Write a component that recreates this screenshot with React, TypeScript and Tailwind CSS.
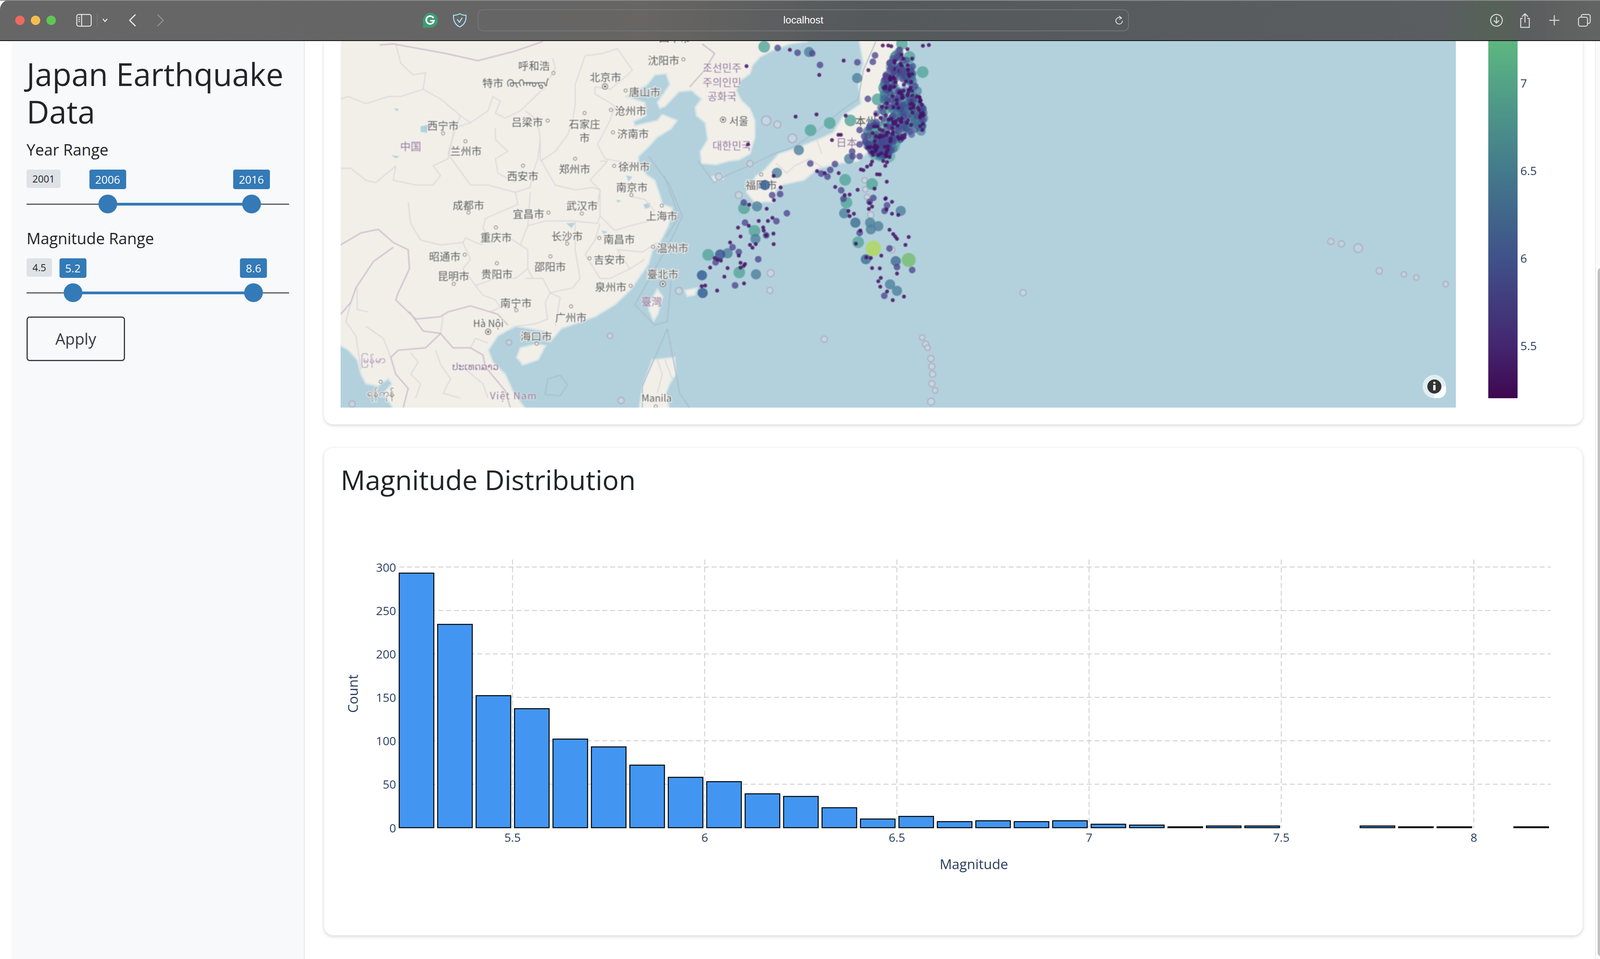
import React from 'react'

// positions traced from the map crops are kept in crop space, zx/zy bring them to page space
const zx = (x: number, from = 860) => from + x / 1.568
const zy = (y: number) => 100 + y / 1.633
const CROP = 'translate(860 100) scale(0.6378 0.6124)'

const COAST =
  'M0,-10 L1907,-10 L1892,10 L1817,22 L1747,50 L1702,75 L1672,110 L1662,145 L1622,175 L1607,215 L1627,255 L1662,290 L1682,340 L1682,410 L1662,480 L1617,505 L1577,510 L1527,525 L1467,520 L1462,470 L1492,420 L1482,350 L1447,320 L1442,285 L1467,250 L1427,215 L1377,220 L1322,280 L1300,290 L1290,265 L1340,190 L1325,145 L1280,150 L1250,190 L1165,240 L1240,265 L1245,320 L1195,345 L1200,362 L1290,340 L1310,315 L1370,340 L1345,375 L1290,410 L1255,450 L1215,490 L1215,520 L1245,565 L1280,590 L1300,650 L1310,690 L1350,705 L1335,780 L1300,850 L1270,885 L1255,940 L1225,985 L1185,1045 L1120,1110 L1040,1160 L905,1210 L860,1265 L835,1220 L720,1200 L650,1240 L612,1300 L630,1350 L680,1400 L710,1470 L770,1560 L240,1560 L190,1480 L225,1440 L210,1420 L170,1450 L120,1440 L100,1400 L85,1340 L50,1300 L0,1270 Z'

const ISLANDS = [
  // honshu, shikoku and kyushu, in the crop of the right half
  'M2097,-10 L2117,100 L2097,190 L2107,270 L2037,320 L1997,390 L1957,410 L1887,440 L1837,460 L1777,480 L1717,550 L1687,570 L1657,620 L1647,640 L1687,690 L1717,680 L1757,680 L1767,630 L1787,610 L1877,590 L1937,540 L2017,520 L2097,510 L2137,470 L2197,440 L2237,380 L2227,300 L2267,200 L2292,100 L2297,-10 Z',
  // taiwan
  'M1290,1045 L1312,1075 L1292,1150 L1275,1178 L1255,1130 L1260,1100 Z',
  // hainan
  'M740,1290 L800,1275 L842,1280 L812,1340 L750,1362 L725,1330 Z',
  // luzon
  'M1270,1340 L1360,1330 L1365,1400 L1340,1440 L1325,1480 L1340,1560 L1215,1560 L1230,1450 Z',
  // jeju and small bits
  'M1510,575 L1550,565 L1555,585 L1520,595 Z',
  'M1400,1050 L1450,1040 L1440,1070 L1410,1075 Z',
]

const LAKES = [
  'M340,365 L370,358 L365,392 L340,388 Z',
  'M232,290 L252,292 L245,302 Z',
  'M222,485 L255,490 L240,498 Z',
  'M1125,672 L1145,675 L1132,684 Z',
  'M1235,690 L1262,685 L1258,705 L1240,708 Z',
  'M1165,570 L1190,575 L1175,595 Z',
  'M1065,800 L1090,805 L1075,815 Z',
  'M925,770 L960,768 L945,790 Z',
]

const BORDERS = [
  'M175,25 L230,20 L440,60 L570,90 L720,50 L830,10',
  'M19,860 L100,810 L170,795 L230,850 L290,880 L295,960 L250,1060 L240,1090 L280,1130 L320,1170 L420,1160 L450,1140 L540,1115 L620,1140 L650,1150 L690,1195',
  'M295,1140 L350,1220 L420,1230 L470,1290 L540,1290 L590,1320 L600,1370 L680,1470 L700,1540',
  'M19,1150 L60,1100 L80,1040 L150,930 L230,870',
  'M250,1300 L220,1330 L240,1400 L290,1460 L270,1540',
  'M420,1230 L360,1290 L250,1300',
  'M1420,200 L1480,130 L1520,60 L1470,20',
]

const MARITIME = [
  'M1255,490 L1340,610 L1390,740 L1350,830 L1280,960 L1200,1110 L1280,1195 L1330,1180 L1345,1010',
  'M1330,1210 L1230,1450 L1230,1542 M1330,1210 L1380,1480 L1420,1542',
  'M850,1420 L900,1405 L930,1445 L900,1490 L840,1485 Z',
  'M1455,510 L1517,600 L1567,570 L1657,530 L1757,480 L1837,450 L1927,390 L2027,300 L2097,250 L2117,130 L2167,10',
  'M1317,570 L1377,740 L1325,830',
]

const PROVINCES = [
  'M240,20 L260,100 L310,150 L360,140 L350,210 L260,240 L210,240 L120,270 L50,240 L19,250',
  'M350,210 L420,250 L500,320 L540,350 L610,300 L630,240 L660,260 L640,310 L680,330 L740,300 L800,240 L840,200 L880,120 L870,80',
  'M500,320 L470,400 L450,500 L390,530 L420,570 L390,610 L320,610 L230,590 L240,530 L160,600 L120,590 L60,540 L19,540',
  'M540,350 L480,370 L450,480 L540,610 L610,610 L720,640 L780,620 L790,560 L810,500 L820,420 L810,340 L760,300',
  'M640,370 L640,420 L690,470 L640,500 L650,560 L720,600',
  'M820,420 L820,500 L880,610 L960,630 L1030,620 L1060,630 L1050,700',
  'M1000,70 L960,190 L960,280 L950,340 L930,400 L880,470 L820,510',
  'M1000,70 L1070,60 L1130,40 L1190,130 L1170,150 L1100,210 L1040,200 L1040,230 L1090,260 L1120,280 L1100,340 L1050,440 L1080,500 L1130,510 L1210,520',
  'M1060,510 L1090,510 L1020,590 L1060,630 L1060,740 L1120,800 L1180,780 L1260,760',
  'M1160,600 L1190,660 L1240,670 L1280,720',
  'M720,640 L730,690 L600,750 L590,790 L620,840 L680,820 L740,860 L770,780 L780,640',
  'M770,780 L840,760 L950,760 L1050,770 L1060,740',
  'M960,760 L960,880 L980,1000 L950,1040 L860,1060',
  'M1060,770 L1040,840 L1000,900 L1060,1000 L1100,1000 L1180,960 L1240,920',
  'M1180,960 L1130,880 L1230,890 L1290,850',
  'M290,680 L300,770 L340,840 L420,860 L510,850 L520,830 L560,850 L590,860',
  'M510,850 L540,920 L510,960 L560,1030 L640,1000 L720,1000 L770,960 L770,880 L740,860',
  'M560,1030 L590,1070 L640,1090 L660,1120 L620,1140',
  'M770,960 L790,1000 L760,1000 L830,1000 L860,1060 L900,1080 L880,1200',
  'M860,1060 L840,1100 L850,1170 L800,1190 L720,1200',
  'M420,1230 L430,1160 M540,1290 L560,1250 L610,1270',
  'M60,1100 L40,1180 L80,1240 L95,1340 L100,1380',
  'M120,1200 L190,1250 L220,1330 M85,1040 L85,1130 L130,1140',
  'M300,1310 L330,1350 L300,1400 L340,1440 L320,1500 M400,1300 L420,1360 L460,1420 L430,1480 L500,1500 M520,1380 L590,1440 L610,1500',
  'M1290,1340 L1310,1400 L1290,1480 M1320,1340 L1350,1420',
  'M1767,520 L1810,560 L1840,530 L1900,500 L1960,540 M1930,420 L1950,480',
]

// name, crop x, crop y, and the city marker if there is one
const CITIES: [string, number, number, number?, number?][] = [
  ['四平市', 1360, -5],
  ['呼和浩', 795, 110, 873, 142],
  ['特市', 630, 182],
  ['ᠬᠥᠬᠡᠬᠣᠲᠠ', 770, 182],
  ['北京市', 1082, 157],
  ['沈阳市', 1315, 87, 1395, 85],
  ['唐山市', 1240, 220, 1163, 215],
  ['沧州市', 1183, 298, 1104, 296],
  ['吕梁市', 768, 345, 850, 341],
  ['石家庄', 998, 353, 998, 309],
  ['市', 998, 411],
  ['济南市', 1193, 395, 1112, 390],
  ['西宁市', 430, 360, 430, 394],
  ['兰州市', 522, 467, 520, 427],
  ['郑州市', 958, 541, 960, 500],
  ['徐州市', 1197, 532, 1117, 530],
  ['西安市', 750, 570, 751, 529],
  ['南京市', 1188, 618, 1186, 652],
  ['成都市', 532, 693, 532, 725],
  ['武汉市', 988, 695, 987, 729],
  ['宜昌市', 773, 729, 853, 725],
  ['上海市', 1308, 737, 1308, 696],
  ['重庆市', 643, 827, 642, 787],
  ['长沙市', 928, 823, 928, 855],
  ['南昌市', 1137, 835, 1057, 831],
  ['温州市', 1352, 872, 1273, 868],
  ['昭通市', 437, 907, 517, 901],
  ['吉安市', 1098, 920, 1018, 916],
  ['邵阳市', 860, 950, 861, 908],
  ['贵阳市', 646, 981, 646, 937],
  ['昆明市', 472, 989, 473, 1023],
  ['臺北市', 1312, 980],
  ['泉州市', 1103, 1035, 1183, 1031],
  ['南宁市', 723, 1101, 724, 1133],
  ['广州市', 943, 1162, 944, 1117],
  ['Hà Nội', 612, 1185],
  ['海口市', 804, 1240, 806, 1273],
  ['Manila', 1287, 1498, 1284, 1535],
  ['ရန်ကုန်', 180, 1475, 180, 1432],
  ['福岡市', 1707, 608, 1707, 566],
  ['서울', 1617, 340],
]

const COUNTRIES: [string, number, number][] = [
  ['中国', 300, 447],
  ['臺灣', 1267, 1095],
  ['Việt Nam', 713, 1487],
  ['ປະເທດລາວ', 560, 1365],
  ['မြန်မာ', 150, 1335],
  ['조선민주', 1550, 118],
  ['주의인민', 1550, 178],
  ['공화국', 1550, 238],
  ['대한민국', 1589, 443],
  ['日本', 2050, 430],
]

const CAPITALS: [number, number][] = [[1080, 198], [1312, 1023], [611, 1223], [1554, 337]]

const RINGS: [number, number, number][] = [
  [1727, 341, 12], [1772, 357, 9], [1832, 415, 11], [1662, 520, 8], [1537, 575, 9], [1617, 652, 9],
  [1377, 1052, 9], [1745, 978, 9], [1742, 1050, 8], [1960, 1254, 8], [2353, 1247, 7], [2367, 1275, 8],
  [2375, 1290, 7], [2388, 1335, 8], [2392, 1368, 8], [2395, 1400, 8], [2392, 1440, 8], [2405, 1468, 7],
  [2389, 1515, 9], [2758, 1060, 8], [2122, 590, 7], [2125, 628, 7], [2132, 660, 7], [2147, 735, 8],
  [2232, 880, 8], [1100, 1240, 7], [695, 1268, 7], [1145, 1510, 8], [65, 1525, 8],
]

// rings on the far right were read from another crop, in page space
const RINGS_RIGHT: [number, number, number][] = [
  [3407, 618, 8], [3434, 624, 8], [3477, 635, 11], [3531, 693, 8], [3594, 702, 7], [3626, 710, 7], [3701, 727, 7],
]

const SMALL: [number, number][] = [
  [505, 45], [623, 150], [721, 90], [1039, 28], [1063, 25], [331, 113], [528, 324], [612, 315], [729, 320], [674, 422], [820, 130],
  [700, 400], [710, 400], [985, 155], [1015, 240], [1025, 245], [337, 440], [701, 560], [614, 552], [687, 618], [777, 630], [745, 650],
  [725, 652], [845, 625], [855, 565], [866, 566], [894, 596], [982, 827], [969, 860], [872, 905], [835, 957], [866, 958], [935, 980],
  [870, 998], [860, 1012], [868, 1035], [895, 1055], [918, 1091], [963, 1076], [213, 1051], [321, 1021], [242, 993], [255, 957], [185, 955],
  [151, 1033], [165, 1030], [297, 788], [265, 850], [340, 780], [380, 760], [417, 760], [435, 747], [440, 572], [468, 620], [412, 709],
  [342, 692], [441, 673], [398, 787], [400, 800], [439, 813], [410, 820], [440, 857], [345, 860], [355, 872], [368, 857], [307, 825],
  [203, 915], [215, 922], [228, 926], [300, 905], [307, 935], [325, 940], [307, 955], [320, 948], [940, 735], [915, 680], [890, 665],
  [825, 685], [835, 700], [822, 710], [905, 797], [920, 815], [928, 825], [935, 835], [740, 718], [762, 730], [745, 740], [788, 800],
  [770, 855], [830, 915], [812, 912], [880, 510], [905, 493], [835, 512], [815, 533], [830, 525], [790, 545], [800, 548], [888, 530],
  [895, 515], [645, 560], [878, 27], [900, 27], [912, 30], [977, 42], [888, 668], [893, 712], [915, 730],
]

const MEDIUM: [number, number][] = [
  [456, 37], [536, 57], [595, 60], [626, 108], [776, 97], [838, 95], [847, 68], [890, 152], [885, 170], [818, 250], [1003, 252],
  [686, 522], [587, 520], [667, 547], [631, 562], [656, 575], [711, 632], [840, 664], [905, 875], [996, 965], [935, 953], [884, 1073],
  [285, 1029], [207, 933], [378, 920], [410, 820], [451, 761], [493, 728], [466, 648], [434, 652], [325, 767], [320, 683], [785, 380],
  [803, 406], [785, 440], [755, 470], [757, 490], [785, 490], [720, 668], [785, 810], [895, 695], [885, 718], [825, 680], [300, 890],
  [275, 870], [905, 100], [910, 120], [955, 130], [935, 75], [945, 45],
]

const LARGE: [number, number, string][] = [
  [582, 54, '#4d7f9c'], [775, 163, '#4d7f9c'], [541, 464, '#4d7f9c'], [453, 559, '#4d7f9c'], [373, 699, '#4d7f9c'], [743, 500, '#4d7f9c'],
  [723, 728, '#4d7f9c'], [950, 718, '#4d7f9c'], [827, 767, '#4d7f9c'], [860, 782, '#4d7f9c'], [830, 795, '#4d7f9c'], [907, 1025, '#4d7f9c'],
  [935, 1052, '#4d7f9c'], [369, 983, '#4d7f9c'], [255, 895, '#4d7f9c'], [225, 900, '#35508f'], [152, 987, '#2f5a92'], [155, 1061, '#2f5a92'],
  [367, 835, '#4d7f9c'], [405, 610, '#2f5a92'], [768, 767, '#3f6d95'], [930, 928, '#3f6d95'], [810, 920, '#3f6d95'], [930, 70, '#4d7f9c'],
]

const TEAL: [number, number][] = [
  [402, 32], [955, 20], [1038, 138], [588, 381], [665, 351], [748, 340], [883, 204], [857, 252], [727, 588], [835, 606], [732, 683],
  [177, 902], [302, 975], [363, 802], [321, 707], [779, 849], [985, 75], [945, 285], [885, 295], [1030, 362], [915, 340],
]

const BIG: [number, number, number, string][] = [
  [982, 923, 18, '#78bf72'],
  [1022, 309, 20, '#a4d26a'],
  [840, 875, 20, '#b0d85f'],
  [862, 412, 20, '#b7c83c'],
]

// rows of the Tohoku cluster: crop y, then its left and right edge there
const CLUSTER_ROWS = [
  [55, 925, 1000],
  [160, 885, 1000],
  [250, 875, 1030],
  [320, 845, 1050],
  [380, 815, 1050],
  [430, 805, 930],
  [490, 835, 905],
]

// fixed pseudo random series so the dense cluster stays the same on every run
function makeCluster() {
  let seed = 17
  const next = () => {
    seed = (seed * 16807) % 2147483647
    return seed / 2147483647
  }
  const dots: { x: number; y: number; r: number; c: string; o: number }[] = []
  for (let i = 0; i < 420; i++) {
    const y = 55 + Math.pow(next(), 0.7) * 435
    const k = CLUSTER_ROWS.findIndex((row, n) => y >= row[0] && y <= CLUSTER_ROWS[n + 1][0])
    const [y0, l0, r0] = CLUSTER_ROWS[k]
    const [y1, l1, r1] = CLUSTER_ROWS[k + 1]
    const t = (y - y0) / (y1 - y0)
    const left = l0 + (l1 - l0) * t
    const right = r0 + (r1 - r0) * t
    const x = left + next() * (right - left)
    const kind = next()
    if (kind < 0.36) dots.push({ x, y, r: 5, c: '#44136a', o: 0.85 })
    else if (kind < 0.72) dots.push({ x, y, r: 8.5, c: '#46498f', o: 0.62 })
    else if (kind < 0.94) dots.push({ x, y, r: 12, c: '#3d6d94', o: 0.58 })
    else dots.push({ x, y, r: 16, c: '#4a9a9c', o: 0.55 })
  }
  return dots.sort((a, b) => b.r - a.r)
}

const CLUSTER = makeCluster()

const BAR_COUNTS = [293, 234, 152, 137, 102, 93, 72, 58, 53, 39, 36, 23, 10, 13, 7, 8, 7, 8, 4, 3, 1, 2, 2, 0, 0, 2, 1, 1, 0, 1]
const Y_TICKS = [0, 50, 100, 150, 200, 250, 300]
const X_TICKS: [string, number][] = [['5.5', 1312], ['6', 1804], ['6.5', 2296], ['7', 2788], ['7.5', 3280], ['8', 3773]]
const COLORBAR_TICKS: [string, number][] = [['7', 212], ['6.5', 436], ['6', 660], ['5.5', 884]]

function MapPlot() {
  return (
    <svg width={2855} height={938} viewBox="872 105 2855 938" className="block shrink-0">
      <rect x={872} y={105} width={2855} height={938} fill="#b3d1dd" />
      <g className="blur-[1px]">
        <g transform={CROP}>
          <path d={COAST} fill="#f2efe9" stroke="#d6e4e6" strokeWidth={4} vectorEffect="non-scaling-stroke" />
          {ISLANDS.map((d, i) => (
            <path key={i} d={d} fill="#f2efe9" stroke="#d6e4e6" strokeWidth={4} vectorEffect="non-scaling-stroke" />
          ))}
          {LAKES.map((d, i) => (
            <path key={i} d={d} fill="#b3d1dd" />
          ))}
          {PROVINCES.map((d, i) => (
            <path key={i} d={d} fill="none" stroke="#dcd6da" strokeWidth={2.5} vectorEffect="non-scaling-stroke" />
          ))}
          {BORDERS.map((d, i) => (
            <path key={i} d={d} fill="none" stroke="#c9bccb" strokeWidth={3} vectorEffect="non-scaling-stroke" />
          ))}
          {MARITIME.map((d, i) => (
            <path key={i} d={d} fill="none" stroke="#a8bccc" strokeWidth={2.5} vectorEffect="non-scaling-stroke" />
          ))}
        </g>
        {RINGS.map(([x, y, r], i) => (
          <circle key={i} cx={zx(x)} cy={zy(y)} r={r} fill="#c0d9e2" stroke="#b3adc0" strokeWidth={3} />
        ))}
        {RINGS_RIGHT.map(([x, y, r], i) => (
          <circle key={i} cx={x} cy={y} r={r} fill="#bcd6e0" stroke="#b3adc0" strokeWidth={3} />
        ))}
        {CITIES.map(([name, x, y, cx, cy]) => (
          <g key={name + x}>
            <text
              x={zx(x)}
              y={zy(y)}
              textAnchor="middle"
              dominantBaseline="central"
              fontSize={name === 'Hà Nội' || name === 'Manila' ? 25 : 27}
              fontFamily="'Noto Sans CJK SC', 'Noto Sans CJK KR', 'Noto Sans', 'DejaVu Sans', sans-serif"
              fill="#5c5c5c"
              stroke="#f7f5f1"
              strokeWidth={4}
              paintOrder="stroke"
            >
              {name}
            </text>
            {cx !== undefined && cy !== undefined && (
              <circle cx={zx(cx)} cy={zy(cy)} r={4} fill="#fbfaf7" stroke="#8f8b86" strokeWidth={2} />
            )}
          </g>
        ))}
        {COUNTRIES.map(([name, x, y]) => (
          <text
            key={name}
            x={zx(x)}
            y={zy(y)}
            textAnchor="middle"
            dominantBaseline="central"
            fontSize={name === 'Việt Nam' || name === 'ປະເທດລາວ' ? 25 : 27}
            letterSpacing={name === 'Việt Nam' ? 2 : 0}
            fontFamily="'Noto Sans CJK SC', 'Noto Sans CJK KR', 'DejaVu Sans', sans-serif"
            fill="#93779b"
            stroke="#f7f5f1"
            strokeWidth={3}
            strokeOpacity={0.6}
            paintOrder="stroke"
          >
            {name}
          </text>
        ))}
        {CAPITALS.map(([x, y]) => (
          <g key={x}>
            <circle cx={zx(x)} cy={zy(y)} r={7} fill="#fbfaf7" stroke="#7c7873" strokeWidth={2} />
            <circle cx={zx(x)} cy={zy(y)} r={3} fill="#6d6a66" />
          </g>
        ))}
        <text x={zx(810, 1700)} y={zy(340)} textAnchor="middle" dominantBaseline="central" fontSize={27} fontFamily="'Noto Sans CJK SC', sans-serif" fill="#4a4a4a">
          本州
        </text>

        {BIG.slice(0, 2).map(([x, y, r, c]) => (
          <circle key={x} cx={zx(x, 1700)} cy={zy(y)} r={r} fill={c} fillOpacity={0.85} />
        ))}
        {TEAL.map(([x, y]) => (
          <circle key={x + '-' + y} cx={zx(x, 1700)} cy={zy(y)} r={15} fill="#5aa89f" fillOpacity={0.85} />
        ))}
        {BIG.slice(2).map(([x, y, r, c]) => (
          <circle key={x} cx={zx(x, 1700)} cy={zy(y)} r={r} fill={c} fillOpacity={0.85} />
        ))}
        {LARGE.map(([x, y, c]) => (
          <circle key={x + '-' + y} cx={zx(x, 1700)} cy={zy(y)} r={13} fill={c} fillOpacity={0.8} />
        ))}
        {CLUSTER.map((d, i) => (
          <circle key={i} cx={zx(d.x, 1700)} cy={zy(d.y)} r={d.r} fill={d.c} fillOpacity={d.o} />
        ))}
        {MEDIUM.map(([x, y]) => (
          <circle key={x + '-' + y} cx={zx(x, 1700)} cy={zy(y)} r={8.5} fill="#4f4a90" fillOpacity={0.8} />
        ))}
        {SMALL.map(([x, y]) => (
          <circle key={x + '-' + y} cx={zx(x, 1700)} cy={zy(y)} r={5} fill="#450f63" fillOpacity={0.85} />
        ))}
      </g>

      <rect x={3642} y={959} width={60} height={60} rx={30} fill="#ffffff" fillOpacity={0.6} />
      <path d="M3672,989 h30 v10 a20,20 0 0 1 -20,20 h-10 Z" fill="#ffffff" fillOpacity={0.9} />
      <circle cx={3672} cy={989} r={18} fill="#333333" />
      <circle cx={3672} cy={979.5} r={2.8} fill="#ffffff" />
      <rect x={3669} y={985} width={6} height={14} rx={1} fill="#ffffff" />
    </svg>
  )
}

function Colorbar() {
  return (
    <svg width={200} height={914} viewBox="3810 105 200 914" className="block ml-[83px] shrink-0">
      <defs>
        <linearGradient id="viridis-cut" x1="0" y1="0" x2="0" y2="1">
          <stop offset="0" stopColor="#5db77f" />
          <stop offset="0.117" stopColor="#53a387" />
          <stop offset="0.362" stopColor="#437a8c" />
          <stop offset="0.607" stopColor="#3f5289" />
          <stop offset="0.852" stopColor="#442670" />
          <stop offset="1" stopColor="#3e0750" />
        </linearGradient>
      </defs>
      <rect x={3810} y={105} width={75} height={914} fill="url(#viridis-cut)" />
      {COLORBAR_TICKS.map(([label, y]) => (
        <text key={label} x={3892} y={y} dominantBaseline="central" fontSize={30} fontFamily="'Open Sans', sans-serif" fill="#2a3f5f">
          {label}
        </text>
      ))}
    </svg>
  )
}

function BarChart() {
  return (
    <svg width={3160} height={1080} viewBox="872 1269 3160 1080" className="block">
      {Y_TICKS.map(t => {
        const y = 2118 - t * 2.2233
        return (
          <g key={t}>
            {t > 0 && <line x1={1022} x2={3970} y1={y} y2={y} stroke="#d3d3d3" strokeWidth={2.5} strokeDasharray="12.5 7.5" />}
            <text x={1014} y={y} textAnchor="end" dominantBaseline="central" fontSize={30} fontFamily="'Open Sans', sans-serif" fill="#2a3f5f">
              {t}
            </text>
          </g>
        )
      })}
      {X_TICKS.map(([label, x]) => (
        <g key={label}>
          <line x1={x} x2={x} y1={1432} y2={2118} stroke="#d3d3d3" strokeWidth={2.5} strokeDasharray="12.5 7.5" />
          <text x={x} y={2142} textAnchor="middle" dominantBaseline="central" fontSize={30} fontFamily="'Open Sans', sans-serif" fill="#2a3f5f">
            {label}
          </text>
        </g>
      ))}
      {BAR_COUNTS.map((c, i) =>
        c === 0 ? null : (
          <rect
            key={i}
            x={1022 + i * 98.4}
            y={2118 - c * 2.2233}
            width={88.6}
            height={c * 2.2233}
            fill="#4296f1"
            stroke="#000000"
            strokeWidth={2.5}
          />
        ),
      )}
      <text x={2493} y={2210} textAnchor="middle" dominantBaseline="central" fontSize={35} fontFamily="'Open Sans', sans-serif" fill="#2a3f5f">
        Magnitude
      </text>
      <text
        x={902}
        y={1775}
        textAnchor="middle"
        dominantBaseline="central"
        fontSize={35}
        fontFamily="'Open Sans', sans-serif"
        fill="#2a3f5f"
        transform="rotate(-90 902 1775)"
      >
        Count
      </text>
    </svg>
  )
}

type SliderProps = {
  min: string
  from: number
  to: number
  fromLabel: string
  toLabel: string
  className?: string
}

function RangeSlider({ min, from, to, fromLabel, toLabel, className }: SliderProps) {
  return (
    <div className={'relative h-[126px] w-[672px] ' + (className ?? '')}>
      <span className="absolute left-0 top-0 flex h-[47px] items-center rounded-[5px] bg-[#dee2e6] px-[15px] text-[25px] text-[#212529]">{min}</span>
      {[
        [from, fromLabel],
        [to, toLabel],
      ].map(([pos, label]) => (
        <span
          key={label}
          style={{ left: pos as number }}
          className="absolute top-0 flex h-[50px] -translate-x-1/2 items-center rounded-[5px] bg-[#337ab7] px-[15px] text-[28px] text-white"
        >
          {label}
        </span>
      ))}
      <div className="absolute left-0 right-0 top-[87px] h-[3px] bg-[#55595c]" />
      <div style={{ left: from, width: to - from }} className="absolute top-[85px] h-[7px] bg-[#337ab7]" />
      {[from, to].map(pos => (
        <div key={pos} style={{ left: pos }} className="absolute top-[64px] h-[48px] w-[48px] -translate-x-1/2 rounded-full bg-[#337ab7]" />
      ))}
    </div>
  )
}

function Toolbar() {
  return (
    <div className="relative flex h-[105px] shrink-0 items-center rounded-t-[24px] border-b-[2px] border-[#111111] bg-[linear-gradient(90deg,#666666_0%,#656565_34%,#686563_40%,#54595c_54%,#5a5e60_90%,#566257_93%,#5b5e5e_95%,#646464_100%)] pl-[39px]">
      <div className="absolute inset-x-0 top-0 h-[2px] rounded-t-[24px] bg-[#8c8c8c]" />
      <div className="flex items-center gap-[16px]">
        <span className="h-6 w-6 rounded-full bg-[#ee6a5f]" />
        <span className="h-6 w-6 rounded-full bg-[#f5bd4f]" />
        <span className="h-6 w-6 rounded-full bg-[#61c554]" />
      </div>
      <svg width={40} height={34} viewBox="0 0 40 34" fill="none" className="ml-[52px] shrink-0">
        <rect x={1.5} y={2} width={37} height={30} rx={5} stroke="#e4e4e4" strokeWidth={2.5} />
        <path d="M14 2v30" stroke="#e4e4e4" strokeWidth={2.5} />
        <path d="M5.5 10h4M5.5 15h4M5.5 20h4" stroke="#e4e4e4" strokeWidth={2.5} />
      </svg>
      <div className="ml-[13px] h-[36px] w-[2px] bg-[#777777]" />
      <svg width={14} height={10} viewBox="0 0 14 10" fill="none" className="ml-[12px] shrink-0">
        <path d="M2 2l5 6 5-6" stroke="#f0f0f0" strokeWidth={2.5} strokeLinecap="round" />
      </svg>
      <svg width={20} height={32} viewBox="0 0 20 32" fill="none" className="ml-[53px] shrink-0">
        <path d="M17 2L3 16l14 14" stroke="#ececec" strokeWidth={3} strokeLinecap="round" strokeLinejoin="round" />
      </svg>
      <svg width={20} height={32} viewBox="0 0 20 32" fill="none" className="ml-[52px] shrink-0">
        <path d="M3 2l14 14L3 30" stroke="#8f8f8f" strokeWidth={3} strokeLinecap="round" strokeLinejoin="round" />
      </svg>
      <svg width={38} height={38} viewBox="0 0 38 38" fill="none" className="ml-[662px] shrink-0">
        <path d="M19 0a19 19 0 1 1 0 38H0V19A19 19 0 0 1 19 0z" fill="#3f9b74" />
        <path d="M26 12a10 10 0 1 0 2 8h-8" stroke="#ffffff" strokeWidth={4} strokeLinecap="round" />
      </svg>
      <svg width={38} height={38} viewBox="0 0 38 38" fill="none" className="ml-[37px] shrink-0">
        <path d="M19 2c5 3 10 4 16 4 1 13-4 24-16 30C7 30 2 19 3 6c6 0 11-1 16-4z" stroke="#a9e2ff" strokeWidth={2.5} />
        <path d="M13 17l5 7 7-11" stroke="#a9e2ff" strokeWidth={2.5} strokeLinecap="round" />
      </svg>
      <div className="ml-[27px] relative flex h-[56px] w-[1667px] items-center justify-center rounded-[14px] border-[2px] border-[#747676] font-['Liberation_Sans',sans-serif] text-[26px] text-white">
        localhost
        <svg width={22} height={26} viewBox="0 0 22 26" fill="none" className="absolute right-[12px] top-[13px]">
          <path d="M17 8a8.5 8.5 0 1 0 2.5 7" stroke="#e2e2e2" strokeWidth={2} strokeLinecap="round" />
          <path d="M11 2l6 5-6 4" stroke="#e2e2e2" strokeWidth={2} strokeLinejoin="round" />
        </svg>
      </div>
      <svg width={34} height={34} viewBox="0 0 34 34" fill="none" className="ml-[924px] shrink-0">
        <circle cx={17} cy={17} r={15} stroke="#dcdcdc" strokeWidth={2.5} />
        <path d="M17 9v15M11 18l6 6 6-6" stroke="#dcdcdc" strokeWidth={2.5} strokeLinecap="round" />
      </svg>
      <svg width={30} height={40} viewBox="0 0 30 40" fill="none" className="ml-[41px] shrink-0">
        <path d="M9 15H4v23h22V15h-5" stroke="#dcdcdc" strokeWidth={2.5} strokeLinejoin="round" />
        <path d="M15 25V3M8 10l7-7 7 7" stroke="#dcdcdc" strokeWidth={2.5} strokeLinecap="round" />
      </svg>
      <svg width={28} height={28} viewBox="0 0 28 28" fill="none" className="ml-[46px] shrink-0">
        <path d="M14 2v24M2 14h24" stroke="#dcdcdc" strokeWidth={2.5} strokeLinecap="round" />
      </svg>
      <svg width={34} height={34} viewBox="0 0 34 34" fill="none" className="ml-[46px] shrink-0">
        <rect x={9} y={2} width={23} height={23} rx={5} stroke="#dcdcdc" strokeWidth={2.5} />
        <rect x={2} y={9} width={23} height={23} rx={5} fill="#5b5e5e" stroke="#dcdcdc" strokeWidth={2.5} />
      </svg>
    </div>
  )
}

function Sidebar() {
  return (
    <aside className="ml-[30px] w-[750px] shrink-0 border-r-[2px] border-[#e6e8ea] bg-[#f8f9fa] pl-[38px] pt-[36px]">
      <h2 className="w-[680px] text-[80px] font-normal leading-[96px] text-[#212529]">Japan Earthquake Data</h2>
      <label className="mt-[20px] block text-[40px] leading-[60px] text-[#212529]">Year Range</label>
      <RangeSlider min="2001" from={207.5} to={575.5} fromLabel="2006" toLabel="2016" className="mt-[21px]" />
      <label className="mt-[20px] block text-[40px] leading-[60px] text-[#212529]">Magnitude Range</label>
      <RangeSlider min="4.5" from={118.5} to={581} fromLabel="5.2" toLabel="8.6" className="mt-[21px]" />
      <button className="mt-[23px] block h-[114px] w-[252px] rounded-[8px] border-[3px] border-[#343a40] text-[40px] text-[#343a40]">Apply</button>
    </aside>
  )
}

export default function App() {
  return (
    <div className="flex h-[2454px] w-[4112px] flex-col overflow-hidden bg-white font-['Open_Sans',sans-serif]">
      <Toolbar />
      <div className="flex min-h-0 flex-1">
        <Sidebar />
        <main className="flex w-[3303px] shrink-0 flex-col pl-[49px] pr-[31px]">
          <section className="flex rounded-b-[24px] bg-white pb-[43px] pl-[43px] shadow-[0_3px_8px_rgba(0,0,0,0.16)]">
            <MapPlot />
            <Colorbar />
          </section>
          <section className="mt-[59px] h-[1249px] overflow-hidden rounded-[24px] border-[1px] border-[#f0f0f0] bg-white pl-[42px] pt-[39px] shadow-[0_3px_8px_rgba(0,0,0,0.16)]">
            <h3 className="text-[70px] font-normal leading-[84px] text-[#212529]">Magnitude Distribution</h3>
            <BarChart />
          </section>
        </main>
        <div className="w-[29px] shrink-0 border-l-[2px] border-[#ececec] bg-[#fafafa] pl-[5px] pt-[581px]">
          <div className="h-[1761px] w-[17px] rounded-full bg-[#c1c1c1]" />
        </div>
      </div>
    </div>
  )
}
